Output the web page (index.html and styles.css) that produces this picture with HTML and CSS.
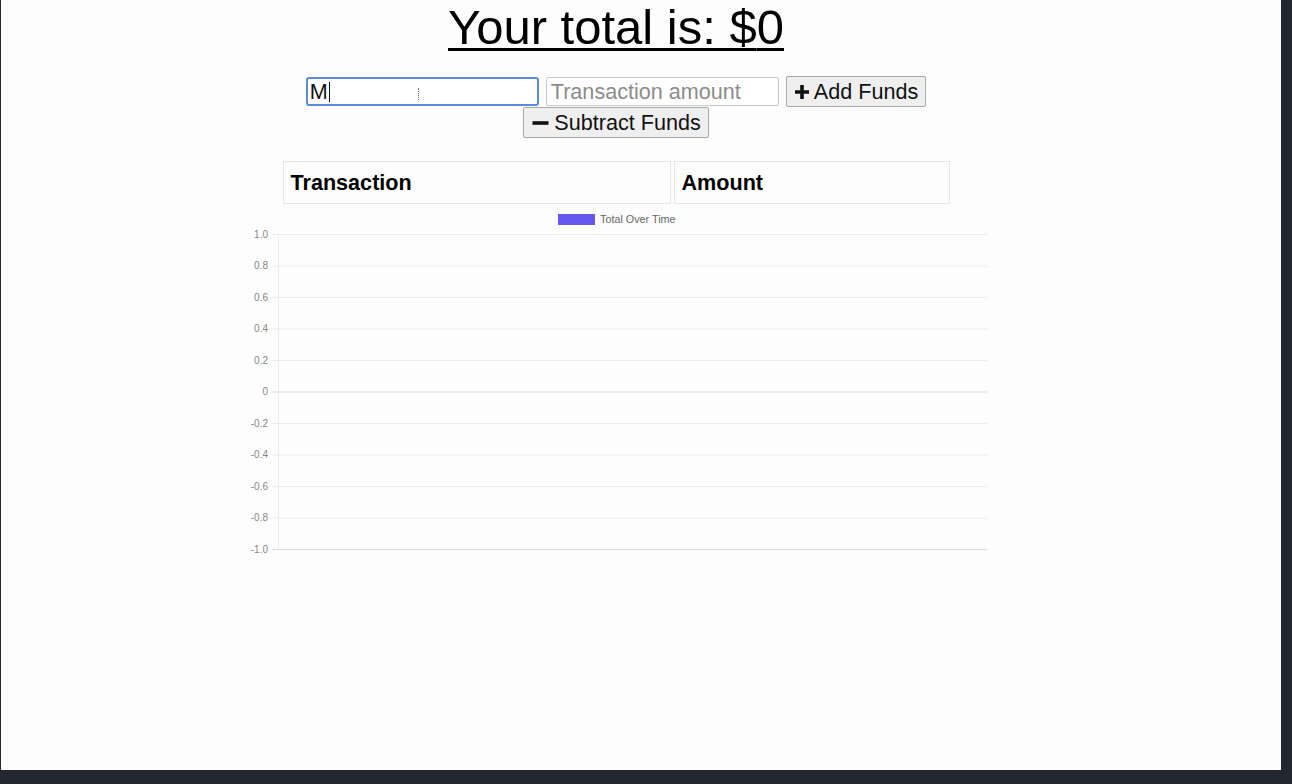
FILE: index.html
```html
<!DOCTYPE html>
<html>
<head>
<meta charset="utf-8">
<title>Budget Tracker</title>
<link rel="stylesheet" href="styles.css">
</head>
<body>
<div class="viewport">
  <main class="app">
    <h1 class="total">Your total is: $<span>0</span></h1>
    <div class="form">
      <div class="row">
        <div class="field focused"><span class="typed">M</span><span class="caret"></span><span class="ibeam"></span></div>
        <div class="field placeholder">Transaction amount</div>
        <button class="btn"><svg class="ico" viewBox="0 0 16 16"><path d="M6.2 1h3.6v5.2H15v3.6H9.8V15H6.2V9.8H1V6.2h5.2z" fill="#111"/></svg>Add Funds</button>
      </div>
      <div class="row">
        <button class="btn"><svg class="ico wide" viewBox="0 0 18 16"><path d="M1 6.2h16v3.6H1z" fill="#111"/></svg>Subtract Funds</button>
      </div>
    </div>
    <table class="tx">
      <thead>
        <tr><th class="c1">Transaction</th><th class="c2">Amount</th></tr>
      </thead>
    </table>
    <svg class="chart" width="752" height="350" viewBox="0 0 752 350">
      <rect x="318" y="6" width="37" height="11" fill="#6658ee"/>
      <text x="360" y="15" class="legend">Total Over Time</text>
      <g stroke="#ececec" stroke-width="1">
        <line x1="32" y1="26.5" x2="747" y2="26.5"/>
        <line x1="32" y1="58" x2="747" y2="58"/>
        <line x1="32" y1="89.5" x2="747" y2="89.5"/>
        <line x1="32" y1="121" x2="747" y2="121"/>
        <line x1="32" y1="152.5" x2="747" y2="152.5"/>
        <line x1="32" y1="215.5" x2="747" y2="215.5"/>
        <line x1="32" y1="247" x2="747" y2="247"/>
        <line x1="32" y1="278.5" x2="747" y2="278.5"/>
        <line x1="32" y1="310" x2="747" y2="310"/>
        <line x1="38.5" y1="26" x2="38.5" y2="342"/>
      </g>
      <g stroke="#dcdcdc" stroke-width="1">
        <line x1="32" y1="184" x2="747" y2="184"/>
        <line x1="32" y1="341.5" x2="747" y2="341.5"/>
      </g>
      <g class="ylab" text-anchor="end">
        <text x="28" y="29.5">1.0</text>
        <text x="28" y="61">0.8</text>
        <text x="28" y="92.5">0.6</text>
        <text x="28" y="124">0.4</text>
        <text x="28" y="155.5">0.2</text>
        <text x="28" y="187">0</text>
        <text x="28" y="218.5">-0.2</text>
        <text x="28" y="250">-0.4</text>
        <text x="28" y="281.5">-0.6</text>
        <text x="28" y="313">-0.8</text>
        <text x="28" y="344.5">-1.0</text>
      </g>
    </svg>
  </main>
</div>
</body>
</html>
```

FILE: styles.css
```css
html, body {
  margin: 0;
  padding: 0;
}
body {
  background: #22262e;
  width: 1292px;
  height: 784px;
  overflow: hidden;
  font-family: "Liberation Sans", Arial, sans-serif;
  color: #000;
}
.viewport {
  margin-left: 1px;
  width: 1280px;
  height: 770px;
  background: #fdfdfd;
}
.app {
  width: 1230px;
  display: flex;
  flex-direction: column;
  align-items: center;
}
.total {
  margin: 0;
  font-size: 49px;
  font-weight: normal;
  line-height: 54px;
  text-decoration: underline;
  text-decoration-thickness: 3px;
  text-underline-offset: 4px;
}
.form {
  margin-top: 22px;
  display: flex;
  flex-direction: column;
  align-items: center;
}
.row {
  display: flex;
  align-items: center;
  gap: 7px;
}
.field {
  position: relative;
  box-sizing: border-box;
  width: 233px;
  height: 29px;
  border: 1px solid #c9c9c9;
  border-radius: 2px;
  background: #fff;
  font-size: 21.6px;
  line-height: 27px;
  padding: 0 4px;
  display: flex;
  align-items: center;
}
.field.focused {
  border: 2px solid #5a8be0;
  border-radius: 3px;
  padding: 0 2px;
  color: #111;
}
.placeholder {
  color: #8c8c8c;
}
.caret {
  width: 1px;
  height: 20px;
  background: #111;
  margin-left: 1px;
}
.ibeam {
  position: absolute;
  left: 110px;
  top: 9px;
  width: 2px;
  height: 12px;
  border-left: 1px dotted #777;
}
.btn {
  box-sizing: border-box;
  height: 31px;
  padding: 0 7px;
  border: 1px solid #a9a9a9;
  border-radius: 2px;
  background: #efefef;
  font-family: "Liberation Sans", Arial, sans-serif;
  font-size: 21.6px;
  color: #111;
  display: flex;
  align-items: center;
  gap: 4px;
}
.ico {
  width: 16px;
  height: 16px;
}
.ico.wide {
  width: 19px;
}
.tx {
  margin-top: 23px;
  border-collapse: separate;
  border-spacing: 3px 0;
  width: 673px;
}
.tx th {
  height: 43px;
  box-sizing: border-box;
  border: 1px solid #e6e6e6;
  text-align: left;
  padding: 0 7px;
  font-size: 21.6px;
  font-weight: bold;
}
.tx .c1 {
  width: 388px;
}
.chart {
  display: block;
  margin-top: 4px;
}
.chart text {
  font-family: "Liberation Sans", Arial, sans-serif;
}
.legend {
  font-size: 10.8px;
  fill: #666;
}
.ylab {
  font-size: 10px;
  fill: #888;
}
```
